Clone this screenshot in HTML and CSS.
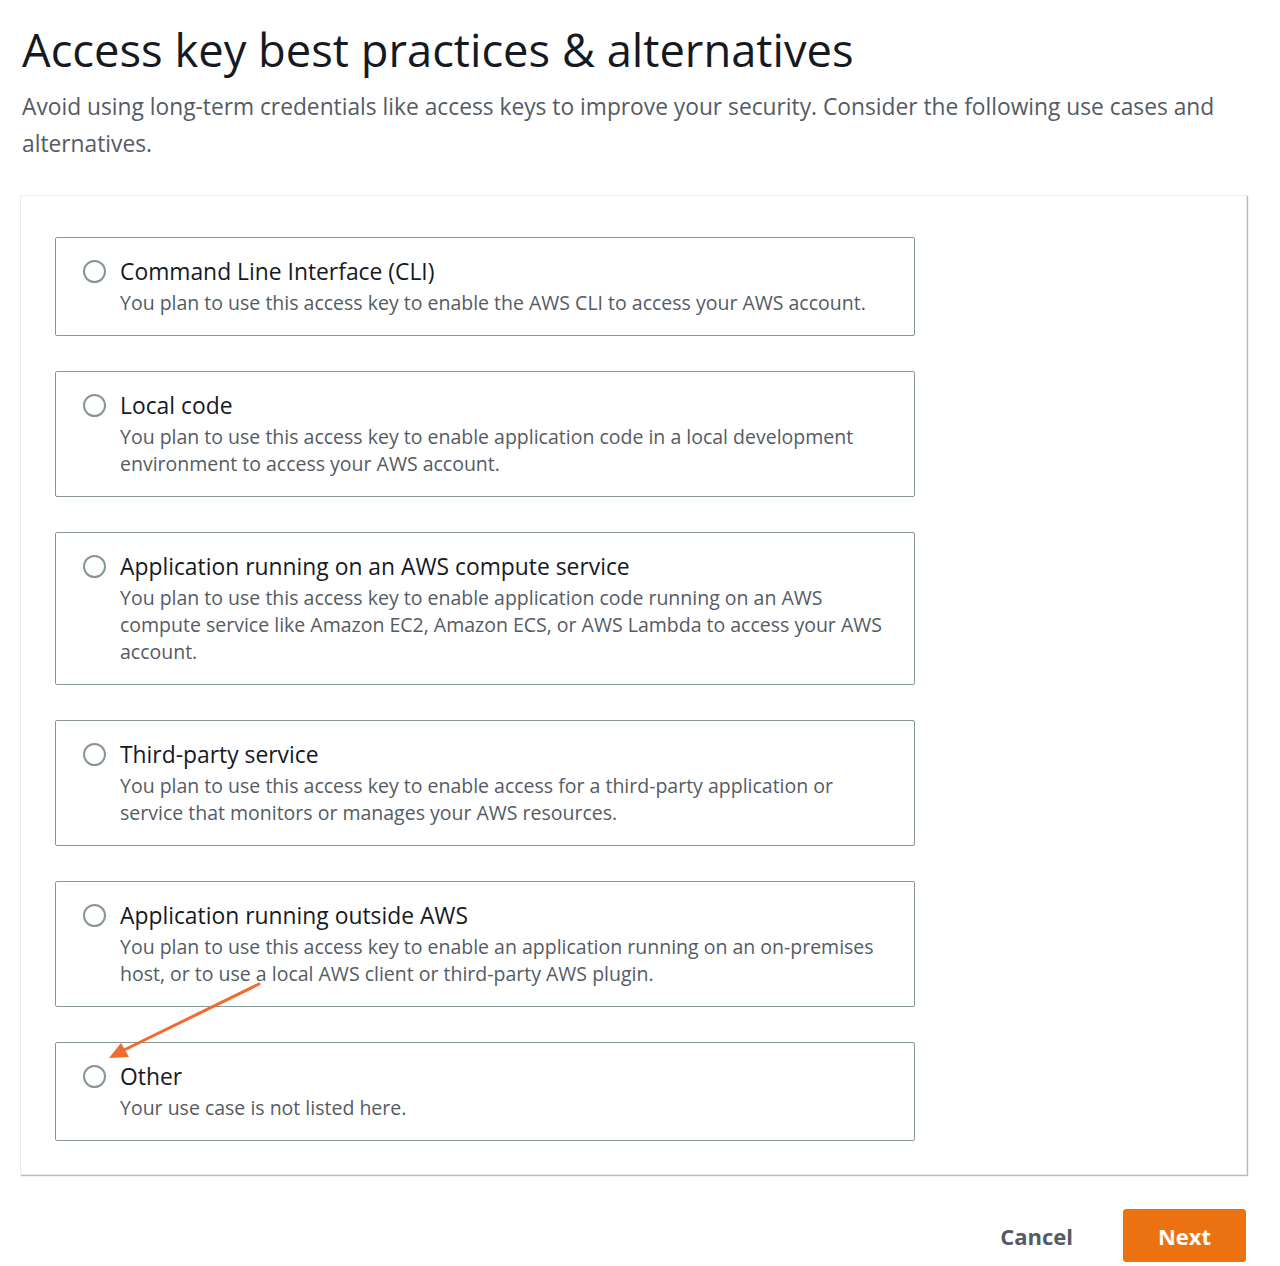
FILE: index.html
```html
<!DOCTYPE html>
<html lang="en">
<head>
<meta charset="utf-8">
<title>Access key best practices &amp; alternatives</title>
<link rel="stylesheet" href="styles.css">
</head>
<body>
<main class="page">
  <header class="header">
    <h1 class="title">Access key best practices &amp; alternatives</h1>
    <p class="subtitle">Avoid using long-term credentials like access keys to improve your security. Consider the following use cases and alternatives.</p>
  </header>

  <section class="card">
    <div class="options">
      <label class="option">
        <span class="radio"></span>
        <span class="option-text">
          <span class="option-title">Command Line Interface (CLI)</span>
          <span class="option-desc">You plan to use this access key to enable the AWS CLI to access your AWS account.</span>
        </span>
      </label>
      <label class="option">
        <span class="radio"></span>
        <span class="option-text">
          <span class="option-title">Local code</span>
          <span class="option-desc">You plan to use this access key to enable application code in a local development environment to access your AWS account.</span>
        </span>
      </label>
      <label class="option">
        <span class="radio"></span>
        <span class="option-text">
          <span class="option-title">Application running on an AWS compute service</span>
          <span class="option-desc">You plan to use this access key to enable application code running on an AWS compute service like Amazon EC2, Amazon ECS, or AWS Lambda to access your AWS account.</span>
        </span>
      </label>
      <label class="option">
        <span class="radio"></span>
        <span class="option-text">
          <span class="option-title">Third-party service</span>
          <span class="option-desc">You plan to use this access key to enable access for a third-party application or service that monitors or manages your AWS resources.</span>
        </span>
      </label>
      <label class="option">
        <span class="radio"></span>
        <span class="option-text">
          <span class="option-title">Application running outside AWS</span>
          <span class="option-desc">You plan to use this access key to enable an application running on an on-premises host, or to use a local AWS client or third-party AWS plugin.</span>
        </span>
      </label>
      <label class="option">
        <span class="radio"></span>
        <span class="option-text">
          <span class="option-title">Other</span>
          <span class="option-desc">Your use case is not listed here.</span>
        </span>
      </label>
    </div>
  </section>

  <footer class="actions">
    <button class="btn-link" type="button">Cancel</button>
    <button class="btn-primary" type="button">Next</button>
  </footer>

  <svg class="annotation" width="170" height="90" viewBox="0 0 170 90" aria-hidden="true">
    <line x1="159" y1="4" x2="22" y2="71" stroke="#f26a2e" stroke-width="3" stroke-linecap="round"/>
    <polygon points="9,78 21,63 29,77" fill="#f26a2e"/>
  </svg>
</main>
</body>
</html>
```

FILE: styles.css
```css
* { box-sizing: border-box; }

html, body {
  margin: 0;
  padding: 0;
  background: #ffffff;
}

body {
  font-family: "Open Sans", "Noto Sans", "Liberation Sans", sans-serif;
  color: #16191f;
}

.page {
  position: relative;
  width: 1280px;
  padding: 18px 33px 0 20px;
}

.header {
  padding-left: 2px;
}

.title {
  margin: 0;
  font-size: 45.3px;
  font-weight: 400;
  line-height: 64px;
  color: #16191f;
}

.subtitle {
  margin: 6px 0 0;
  font-size: 22.75px;
  line-height: 37px;
  color: #545b64;
}

.card {
  margin-top: 33px;
  border: 1px solid #eaeded;
  box-shadow: 1px 1px 1px 0 rgba(0, 28, 36, 0.3);
  padding: 41px 34px 33px;
}

.options {
  display: flex;
  flex-direction: column;
  gap: 35px;
  width: 860px;
}

.option {
  display: grid;
  grid-template-columns: 23px 1fr;
  column-gap: 14px;
  border: 1px solid #879596;
  border-radius: 2px;
  padding: 19px 27px 19px 27px;
}

.radio {
  width: 23px;
  height: 23px;
  margin-top: 3px;
  border: 2px solid #879596;
  border-radius: 50%;
  background: #fff;
}

.option-text {
  display: flex;
  flex-direction: column;
}

.option-title {
  font-size: 22.85px;
  line-height: 30px;
  color: #16191f;
}

.option-desc {
  margin-top: 2px;
  font-size: 19.5px;
  line-height: 27px;
  color: #545b64;
}

.actions {
  display: flex;
  justify-content: flex-end;
  align-items: center;
  gap: 36px;
  margin-top: 34px;
  padding-right: 1px;
}

.btn-link {
  border: none;
  background: none;
  padding: 0 14px;
  font-family: inherit;
  font-size: 22px;
  font-weight: 700;
  color: #545b64;
  cursor: pointer;
}

.btn-primary {
  width: 123px;
  height: 53px;
  border: 1px solid #ec7211;
  border-radius: 3px;
  background: #ec7211;
  color: #ffffff;
  font-family: inherit;
  font-size: 22px;
  font-weight: 700;
  cursor: pointer;
}

.annotation {
  position: absolute;
  left: 100px;
  top: 980px;
}
```
